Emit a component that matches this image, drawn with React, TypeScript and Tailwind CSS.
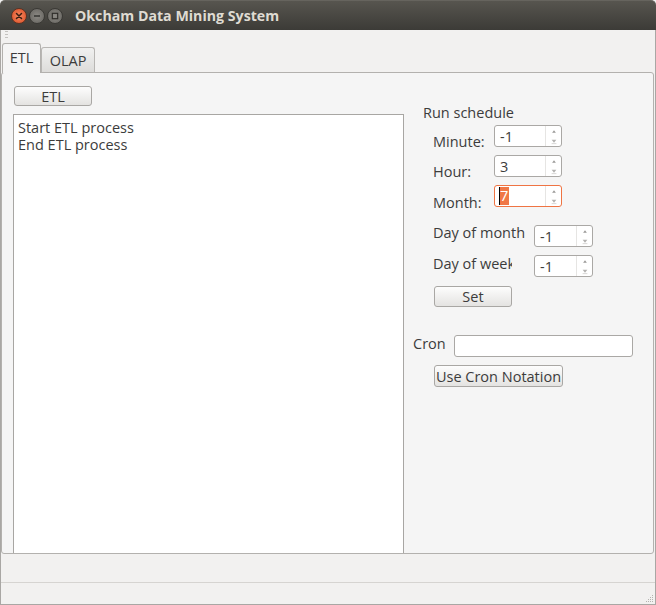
import React from "react";

function Btn({ h = "h-[21px]", w, children, className = "" }: { h?: string; w: string; children: React.ReactNode; className?: string }) {
  return (
    <div
      className={`${w} ${h} shrink-0 flex items-center justify-center rounded-[3px] border border-[#a9a7a4] bg-linear-to-b from-[#fdfdfd] to-[#e4e3e1] text-[14.5px] leading-[19px] text-[#3c3c3c] ${className}`}
    >
      {children}
    </div>
  );
}

function Spin({ w, value, focus = false }: { w: string; value: string; focus?: boolean }) {
  return (
    <div
      className={`${w} h-[22px] shrink-0 flex rounded-[3px] border bg-white ${focus ? "border-[#ef7443]" : "border-[#aaa8a5]"}`}
    >
      <div className="flex-1 flex items-center pl-[5px] text-[14.5px] leading-[19px] text-[#3c3c3c]">
        {focus ? (
          <span className="relative inline-block bg-[#f07746] text-white px-[1px] h-[18px] leading-[18px] -ml-[1px]">
            <span className="absolute left-[0px] top-0 w-[1px] h-[18px] bg-black" />
            {value}
          </span>
        ) : (
          value
        )}
      </div>
      <div className="w-[16px] flex flex-col items-center border-l border-[#e6e5e3]">
        <svg width="16" height="10" viewBox="0 0 16 10" className="mt-[1px]">
          <path d="M6 6 L8 3.5 L10 6 Z" fill="#9a9997" />
        </svg>
        <svg width="16" height="10" viewBox="0 0 16 10">
          <path d="M5.5 3 L10.5 3 L8 6 Z" fill="#b4b3b1" />
          <path d="M5.5 7 L10.5 7" stroke="#d5d4d2" strokeWidth="1" />
        </svg>
      </div>
    </div>
  );
}

export default function App() {
  return (
    <div className="w-[656px] h-[605px] flex flex-col bg-[#f2f1f0] overflow-hidden font-['Open_Sans','DejaVu_Sans',sans-serif] text-[#3c3c3c]">
      {/* Title bar */}
      <div className="h-[30px] shrink-0 flex items-center rounded-t-[5px] bg-linear-to-b from-[#57554f] to-[#3c3b37] border-t border-[#66645e]">
        <div className="flex items-center ml-[11px] gap-[2px]">
          <div className="w-[16px] h-[16px] rounded-full bg-radial from-[#f58a62] to-[#d8471b] border border-[#5a3324] flex items-center justify-center">
            <svg width="8" height="8" viewBox="0 0 8 8">
              <path d="M1.5 1.5 L6.5 6.5 M6.5 1.5 L1.5 6.5" stroke="#3a1e12" strokeWidth="1.5" strokeLinecap="round" />
            </svg>
          </div>
          <div className="w-[16px] h-[16px] rounded-full bg-radial from-[#8c8a85] to-[#64625d] border border-[#3a3935] flex items-center justify-center">
            <svg width="8" height="8" viewBox="0 0 8 8">
              <path d="M1 4 L7 4" stroke="#2f2e2b" strokeWidth="1.4" />
            </svg>
          </div>
          <div className="w-[16px] h-[16px] rounded-full bg-radial from-[#8c8a85] to-[#64625d] border border-[#3a3935] flex items-center justify-center">
            <svg width="8" height="8" viewBox="0 0 8 8">
              <rect x="1.3" y="1.3" width="5.4" height="5.4" fill="none" stroke="#2f2e2b" strokeWidth="1.2" />
            </svg>
          </div>
        </div>
        <div className="ml-[12px] text-[14.2px] font-bold text-[#dfdbd2] leading-[20px]">Okcham Data Mining System</div>
      </div>

      {/* Body */}
      <div className="flex-1 flex flex-col border-x border-b border-[#a9a7a4]">
        {/* grip + tabs */}
        <div className="h-[42px] shrink-0 relative flex items-end pl-[1px]">
          <div className="absolute left-[4px] top-[1px] flex flex-col gap-[2px]">
            <div className="w-[3px] h-[1px] bg-[#c4c2bf]" />
            <div className="w-[3px] h-[1px] bg-[#c4c2bf]" />
            <div className="w-[3px] h-[1px] bg-[#c4c2bf]" />
          </div>
          <div className="relative z-10 w-[39px] h-[30px] -mb-[1px] rounded-t-[3px] border-x border-t border-[#b3b1ae] bg-[#f5f5f5] flex items-start justify-center pt-[4px] text-[14.5px] leading-[19px]">
            ETL
          </div>
          <div className="w-[54px] h-[25px] rounded-t-[3px] border-x border-t border-[#b8b6b3] bg-linear-to-b from-[#f1f1f0] to-[#dddcda] flex items-start justify-center pt-[3px] text-[14.5px] leading-[19px] text-[#3c3c3c]">
            OLAP
          </div>
        </div>

        {/* Pane */}
        <div className="h-[482px] shrink-0 mr-[1px] flex rounded-[3px] border border-[#b3b1ae] bg-[#f5f5f5]">
          {/* left column */}
          <div className="w-[402px] shrink-0 flex flex-col pl-[11px] pt-[13px]">
            <Btn h="h-[20px]" w="w-[78px]" className="ml-[1px]">ETL</Btn>
            <div className="mt-[8px] flex-1 border-x border-t border-[#a8a6a3] bg-white px-[4px] pt-[4px] text-[14.5px] leading-[17px] text-[#3c3c3c]">
              <div className="h-[17px]">Start ETL process</div>
              <div className="h-[17px]">End ETL process</div>
            </div>
          </div>

          {/* right column */}
          <div className="flex-1 flex flex-col pl-[9px] text-[14.5px] leading-[19px]">
            <div className="mt-[30px] ml-[10px] h-[19px]">Run schedule</div>

            <div className="mt-[3px] ml-[20px] h-[22px] flex items-start">
              <div className="w-[61px] h-[22px] pt-[7px]">Minute:</div>
              <Spin w="w-[68px]" value="-1" />
            </div>
            <div className="mt-[8px] ml-[20px] h-[22px] flex items-start">
              <div className="w-[61px] h-[22px] pt-[7px]">Hour:</div>
              <Spin w="w-[68px]" value="3" />
            </div>
            <div className="mt-[8px] ml-[20px] h-[22px] flex items-start">
              <div className="w-[61px] h-[22px] pt-[8px]">Month:</div>
              <Spin w="w-[68px]" value="7" focus />
            </div>

            <div className="mt-[18px] ml-[20px] h-[22px] flex items-start">
              <div className="w-[101px] h-[22px] -mt-[2px] whitespace-nowrap">
                <span className="inline-block w-[92px] overflow-hidden align-top">Day of month</span>
              </div>
              <Spin w="w-[59px]" value="-1" />
            </div>
            <div className="mt-[8px] ml-[20px] h-[22px] flex items-start">
              <div className="w-[101px] h-[22px] -mt-[1px] whitespace-nowrap">
                <span className="inline-block w-[79px] overflow-hidden align-top">Day of week</span>
              </div>
              <Spin w="w-[59px]" value="-1" />
            </div>

            <Btn w="w-[78px]" className="mt-[9px] ml-[21px]">Set</Btn>

            <div className="mt-[28px] h-[22px] flex items-start">
              <div className="w-[41px] -mt-[1px]">Cron</div>
              <div className="w-[179px] h-[22px] rounded-[3px] border border-[#aaa8a5] bg-white" />
            </div>

            <Btn w="w-[129px]" h="h-[22px]" className="mt-[8px] ml-[21px]">Use Cron Notation</Btn>
          </div>
        </div>

        {/* spacer */}
        <div className="h-[28px] shrink-0" />
        {/* status bar */}
        <div className="flex-1 relative border-t border-[#d6d4d1]">
          <div className="absolute right-[2px] bottom-[2px] grid grid-cols-4 gap-[1px]">
            {Array.from({ length: 16 }).map((_, i) => {
              const r = Math.floor(i / 4);
              const c = i % 4;
              const show = c + r >= 3;
              return <div key={i} className={`w-[1px] h-[1px] ${show ? "bg-[#b5b3b0]" : "bg-transparent"}`} />;
            })}
          </div>
        </div>
      </div>
    </div>
  );
}
